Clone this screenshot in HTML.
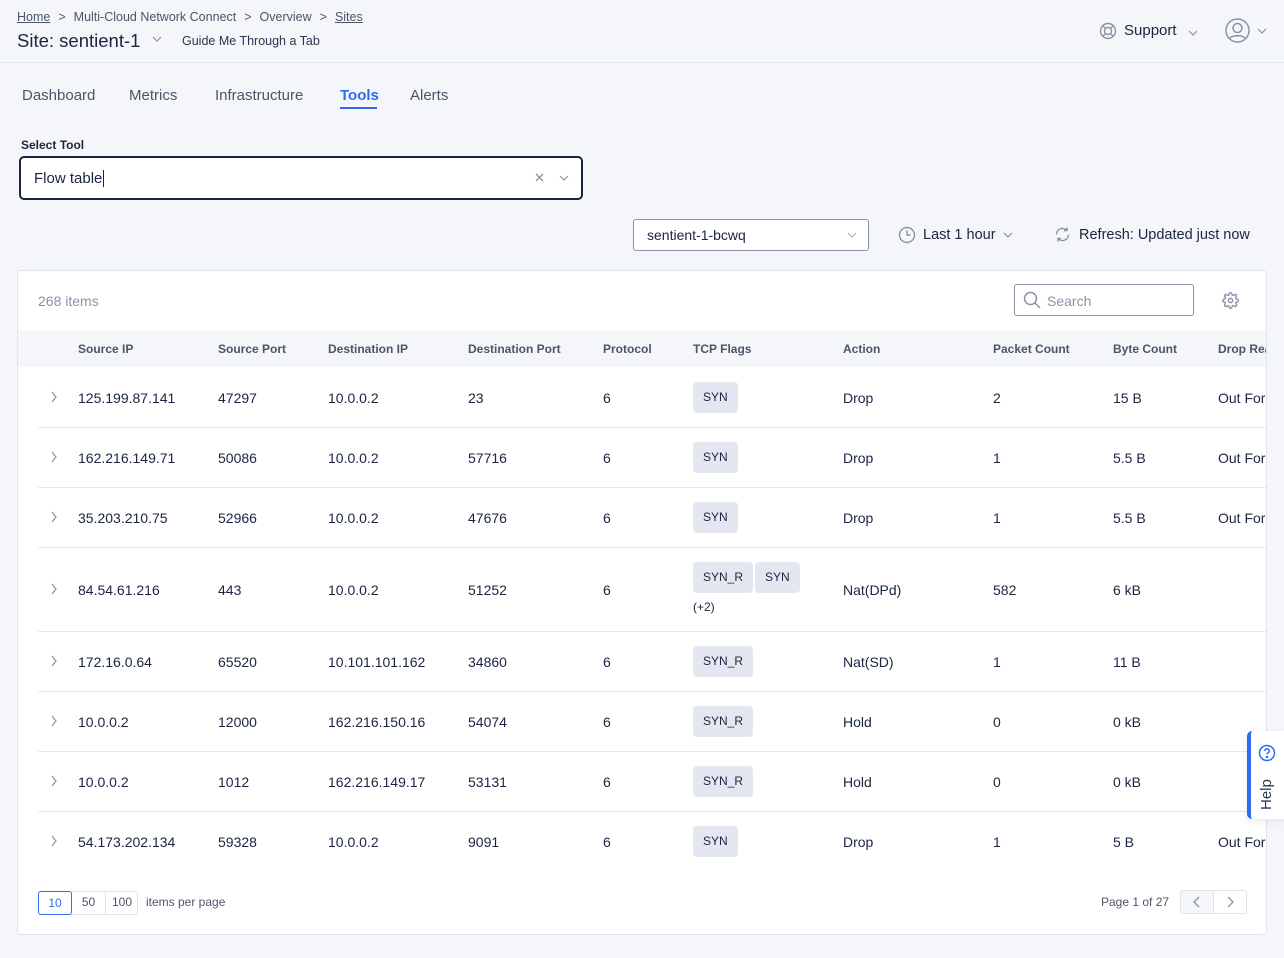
<!DOCTYPE html>
<html><head><meta charset="utf-8"><style>
*{box-sizing:border-box;margin:0;padding:0}
body{width:1284px;height:958px;background:#f5f6f9;font-family:"Liberation Sans",sans-serif;color:#1b2541;position:relative;overflow:hidden}
.a{position:absolute;white-space:nowrap}
.g{color:#4b5569}
.card{position:absolute;left:17px;top:270px;width:1250px;height:665px;background:#fff;border:1px solid #e1e5ee;border-radius:4px;overflow:hidden}
.th{position:absolute;left:0;top:59px;width:1250px;height:37px;background:#f5f6f9}
.th span{position:absolute;top:12px;font-size:12px;font-weight:bold;color:#4b5569;white-space:nowrap}
.row{position:absolute;left:20px;width:1230px;border-bottom:1px solid #e3e6ee}
.row span{position:absolute;font-size:14px;white-space:nowrap}
.tag{position:absolute;background:#e3e7f0;border-radius:4px;height:31px;font-size:12px;line-height:31px;padding:0 10px;color:#1b2541}
.row svg.ch{position:absolute;left:13px}
.sep{margin:0 8px;color:#4b5569}
</style></head><body>
<div class="a g" style="left:17px;top:10px;font-size:12.5px"><u>Home</u><span class="sep">&gt;</span>Multi-Cloud Network Connect<span class="sep">&gt;</span>Overview<span class="sep">&gt;</span><u>Sites</u></div>
<div class="a" style="left:17px;top:30px;font-size:18.5px">Site: sentient-1</div>
<svg class="a" style="left:152px;top:36px" width="10" height="6" viewBox="0 0 10 6" fill="none" stroke="#8a93a6" stroke-width="1.2"><path d="M1 1l4 4 4-4"/></svg>
<div class="a" style="left:182px;top:34px;font-size:12.5px;color:#2b3550">Guide Me Through a Tab</div>
<svg class="a" style="left:1099px;top:22px" width="18" height="18" viewBox="0 0 18 18" fill="none" stroke="#8a93a6" stroke-width="1.4"><circle cx="9" cy="9" r="7.5"/><circle cx="9" cy="9" r="3.5"/><path d="M4 4l2.5 2.5M14 4l-2.5 2.5M4 14l2.5-2.5M14 14l-2.5-2.5"/></svg>
<div class="a" style="left:1124px;top:22px;font-size:15px">Support</div>
<svg class="a" style="left:1188px;top:30px" width="10" height="6" viewBox="0 0 10 6" fill="none" stroke="#8a93a6" stroke-width="1.2"><path d="M1 1l4 4 4-4"/></svg>
<svg class="a" style="left:1225px;top:18px" width="25" height="25" viewBox="0 0 25 25" fill="none" stroke="#8a93a6" stroke-width="1.5"><circle cx="12.5" cy="12.5" r="11.5"/><circle cx="12.5" cy="10" r="4.5"/><path d="M5 20c3-3 12-3 15 0"/></svg>
<svg class="a" style="left:1257px;top:28px" width="10" height="6" viewBox="0 0 10 6" fill="none" stroke="#8a93a6" stroke-width="1.2"><path d="M1 1l4 4 4-4"/></svg>
<div class="a" style="left:0;top:62px;width:1284px;height:1px;background:#e1e5ee"></div>
<div class="a g" style="left:22px;top:87px;font-size:15px">Dashboard</div>
<div class="a g" style="left:129px;top:87px;font-size:15px">Metrics</div>
<div class="a g" style="left:215px;top:87px;font-size:15px">Infrastructure</div>
<div class="a" style="left:340px;top:87px;font-size:15px;font-weight:bold;color:#2f6bf0">Tools</div>
<div class="a" style="left:340px;top:107px;width:37px;height:2px;background:#2f6bf0"></div>
<div class="a g" style="left:410px;top:87px;font-size:15px">Alerts</div>
<div class="a" style="left:21px;top:138px;font-size:12px;font-weight:bold">Select Tool</div>
<div class="a" style="left:19px;top:156px;width:564px;height:44px;border:2px solid #1b2541;border-radius:5px;background:#fff"></div>
<div class="a" style="left:34px;top:170px;font-size:15px">Flow table<span style="border-left:1px solid #1b2541;margin-left:1px"></span></div>
<svg class="a" style="left:535px;top:173px" width="9" height="9" viewBox="0 0 9 9" stroke="#8a93a6" stroke-width="1.3"><path d="M1 1l7 7M8 1l-7 7"/></svg>
<svg class="a" style="left:559px;top:175px" width="10" height="6" viewBox="0 0 10 6" fill="none" stroke="#8a93a6" stroke-width="1.2"><path d="M1 1l4 4 4-4"/></svg>
<div class="a" style="left:633px;top:219px;width:236px;height:32px;border:1px solid #8a93a6;border-radius:3px;background:#fff"></div>
<div class="a" style="left:647px;top:227px;font-size:14px">sentient-1-bcwq</div>
<svg class="a" style="left:847px;top:232px" width="10" height="6" viewBox="0 0 10 6" fill="none" stroke="#b0b7c5" stroke-width="1.2"><path d="M1 1l4 4 4-4"/></svg>
<svg class="a" style="left:898px;top:226px" width="18" height="18" viewBox="0 0 18 18" fill="none" stroke="#8a93a6" stroke-width="1.4"><circle cx="9" cy="9" r="7.5"/><path d="M9 4.5V9h3.5"/></svg>
<div class="a" style="left:923px;top:227px;font-size:14.5px">Last 1 hour</div>
<svg class="a" style="left:1003px;top:232px" width="10" height="6" viewBox="0 0 10 6" fill="none" stroke="#8a93a6" stroke-width="1.2"><path d="M1 1l4 4 4-4"/></svg>
<svg class="a" style="left:1054px;top:226px" width="17" height="17" viewBox="0 0 17 17" fill="none" stroke="#8a93a6" stroke-width="1.4"><path d="M2.5 8.5a6 6 0 0 1 10.5-4M14.5 8.5a6 6 0 0 1-10.5 4M13 1.5v3h-3M4 15.5v-3h3"/></svg>
<div class="a" style="left:1079px;top:227px;font-size:14.5px">Refresh: Updated just now</div>

<div class="card">
<div class="a" style="left:20px;top:22px;font-size:14px;color:#8a93a6">268 items</div>
<div class="a" style="left:996px;top:13px;width:180px;height:32px;border:1px solid #8a93a6;border-radius:3px"></div>
<svg class="a" style="left:1005px;top:20px" width="18" height="18" viewBox="0 0 18 18" fill="none" stroke="#8a93a6" stroke-width="1.5"><circle cx="7.5" cy="7.5" r="6"/><path d="M12 12l5 5"/></svg>
<div class="a" style="left:1029px;top:22px;font-size:14px;color:#8a93a6">Search</div>
<svg class="a" style="left:1204px;top:21px" width="17" height="17" viewBox="0 0 24 24" fill="none" stroke="#8a93a6" stroke-width="2"><circle cx="12" cy="12" r="3"/><path d="M19.4 15a1.7 1.7 0 0 0 .3 1.8l.1.1a2 2 0 1 1-2.8 2.8l-.1-.1a1.7 1.7 0 0 0-1.8-.3 1.7 1.7 0 0 0-1 1.5V21a2 2 0 1 1-4 0v-.1a1.7 1.7 0 0 0-1.1-1.5 1.7 1.7 0 0 0-1.8.3l-.1.1a2 2 0 1 1-2.8-2.8l.1-.1a1.7 1.7 0 0 0 .3-1.8 1.7 1.7 0 0 0-1.5-1H3a2 2 0 1 1 0-4h.1a1.7 1.7 0 0 0 1.5-1.1 1.7 1.7 0 0 0-.3-1.8l-.1-.1a2 2 0 1 1 2.8-2.8l.1.1a1.7 1.7 0 0 0 1.8.3H9a1.7 1.7 0 0 0 1-1.5V3a2 2 0 1 1 4 0v.1a1.7 1.7 0 0 0 1 1.5 1.7 1.7 0 0 0 1.8-.3l.1-.1a2 2 0 1 1 2.8 2.8l-.1.1a1.7 1.7 0 0 0-.3 1.8V9a1.7 1.7 0 0 0 1.5 1H21a2 2 0 1 1 0 4h-.1a1.7 1.7 0 0 0-1.5 1z"/></svg>
<div class="th"><span style="left:60px">Source IP</span><span style="left:200px">Source Port</span><span style="left:310px">Destination IP</span><span style="left:450px">Destination Port</span><span style="left:585px">Protocol</span><span style="left:675px">TCP Flags</span><span style="left:825px">Action</span><span style="left:975px">Packet Count</span><span style="left:1095px">Byte Count</span><span style="left:1200px">Drop Reason</span></div>

<div class="row" style="top:96px;height:61px"><svg class="ch" style="top:24px" width="6" height="12" viewBox="0 0 6 12" fill="none" stroke="#8a93a6" stroke-width="1.2"><path d="M1 1l4 5-4 5"/></svg><span style="left:40px;top:23px">125.199.87.141</span><span style="left:180px;top:23px">47297</span><span style="left:290px;top:23px">10.0.0.2</span><span style="left:430px;top:23px">23</span><span style="left:565px;top:23px">6</span><div class="tag" style="left:655px;top:15px">SYN</div><span style="left:805px;top:23px">Drop</span><span style="left:955px;top:23px">2</span><span style="left:1075px;top:23px">15 B</span><span style="left:1180px;top:23px">Out For</span></div>
<div class="row" style="top:157px;height:60px"><svg class="ch" style="top:23px" width="6" height="12" viewBox="0 0 6 12" fill="none" stroke="#8a93a6" stroke-width="1.2"><path d="M1 1l4 5-4 5"/></svg><span style="left:40px;top:22px">162.216.149.71</span><span style="left:180px;top:22px">50086</span><span style="left:290px;top:22px">10.0.0.2</span><span style="left:430px;top:22px">57716</span><span style="left:565px;top:22px">6</span><div class="tag" style="left:655px;top:14px">SYN</div><span style="left:805px;top:22px">Drop</span><span style="left:955px;top:22px">1</span><span style="left:1075px;top:22px">5.5 B</span><span style="left:1180px;top:22px">Out For</span></div>
<div class="row" style="top:217px;height:60px"><svg class="ch" style="top:23px" width="6" height="12" viewBox="0 0 6 12" fill="none" stroke="#8a93a6" stroke-width="1.2"><path d="M1 1l4 5-4 5"/></svg><span style="left:40px;top:22px">35.203.210.75</span><span style="left:180px;top:22px">52966</span><span style="left:290px;top:22px">10.0.0.2</span><span style="left:430px;top:22px">47676</span><span style="left:565px;top:22px">6</span><div class="tag" style="left:655px;top:14px">SYN</div><span style="left:805px;top:22px">Drop</span><span style="left:955px;top:22px">1</span><span style="left:1075px;top:22px">5.5 B</span><span style="left:1180px;top:22px">Out For</span></div>
<div class="row" style="top:277px;height:84px"><svg class="ch" style="top:35px" width="6" height="12" viewBox="0 0 6 12" fill="none" stroke="#8a93a6" stroke-width="1.2"><path d="M1 1l4 5-4 5"/></svg><span style="left:40px;top:34px">84.54.61.216</span><span style="left:180px;top:34px">443</span><span style="left:290px;top:34px">10.0.0.2</span><span style="left:430px;top:34px">51252</span><span style="left:565px;top:34px">6</span><div class="tag" style="left:655px;top:14px">SYN_R</div><div class="tag" style="left:717px;top:14px">SYN</div><span style="left:655px;top:52px;font-size:12px">(+2)</span><span style="left:805px;top:34px">Nat(DPd)</span><span style="left:955px;top:34px">582</span><span style="left:1075px;top:34px">6 kB</span></div>
<div class="row" style="top:361px;height:60px"><svg class="ch" style="top:23px" width="6" height="12" viewBox="0 0 6 12" fill="none" stroke="#8a93a6" stroke-width="1.2"><path d="M1 1l4 5-4 5"/></svg><span style="left:40px;top:22px">172.16.0.64</span><span style="left:180px;top:22px">65520</span><span style="left:290px;top:22px">10.101.101.162</span><span style="left:430px;top:22px">34860</span><span style="left:565px;top:22px">6</span><div class="tag" style="left:655px;top:14px">SYN_R</div><span style="left:805px;top:22px">Nat(SD)</span><span style="left:955px;top:22px">1</span><span style="left:1075px;top:22px">11 B</span></div>
<div class="row" style="top:421px;height:60px"><svg class="ch" style="top:23px" width="6" height="12" viewBox="0 0 6 12" fill="none" stroke="#8a93a6" stroke-width="1.2"><path d="M1 1l4 5-4 5"/></svg><span style="left:40px;top:22px">10.0.0.2</span><span style="left:180px;top:22px">12000</span><span style="left:290px;top:22px">162.216.150.16</span><span style="left:430px;top:22px">54074</span><span style="left:565px;top:22px">6</span><div class="tag" style="left:655px;top:14px">SYN_R</div><span style="left:805px;top:22px">Hold</span><span style="left:955px;top:22px">0</span><span style="left:1075px;top:22px">0 kB</span></div>
<div class="row" style="top:481px;height:60px"><svg class="ch" style="top:23px" width="6" height="12" viewBox="0 0 6 12" fill="none" stroke="#8a93a6" stroke-width="1.2"><path d="M1 1l4 5-4 5"/></svg><span style="left:40px;top:22px">10.0.0.2</span><span style="left:180px;top:22px">1012</span><span style="left:290px;top:22px">162.216.149.17</span><span style="left:430px;top:22px">53131</span><span style="left:565px;top:22px">6</span><div class="tag" style="left:655px;top:14px">SYN_R</div><span style="left:805px;top:22px">Hold</span><span style="left:955px;top:22px">0</span><span style="left:1075px;top:22px">0 kB</span></div>
<div class="row" style="top:541px;height:60px;border:none"><svg class="ch" style="top:23px" width="6" height="12" viewBox="0 0 6 12" fill="none" stroke="#8a93a6" stroke-width="1.2"><path d="M1 1l4 5-4 5"/></svg><span style="left:40px;top:22px">54.173.202.134</span><span style="left:180px;top:22px">59328</span><span style="left:290px;top:22px">10.0.0.2</span><span style="left:430px;top:22px">9091</span><span style="left:565px;top:22px">6</span><div class="tag" style="left:655px;top:14px">SYN</div><span style="left:805px;top:22px">Drop</span><span style="left:955px;top:22px">1</span><span style="left:1075px;top:22px">5 B</span><span style="left:1180px;top:22px">Out For</span></div>

<div class="a" style="left:20px;top:620px;width:100px;height:24px;border:1px solid #dfe3ec;border-radius:3px"></div>
<div class="a" style="left:20px;top:620px;width:34px;height:24px;border:1px solid #2f6bf0;border-radius:3px;color:#2f6bf0;font-size:12px;text-align:center;line-height:22px">10</div>
<div class="a g" style="left:54px;top:620px;width:34px;height:24px;border-right:1px solid #dfe3ec;font-size:12px;text-align:center;line-height:22px">50</div>
<div class="a g" style="left:88px;top:620px;width:32px;font-size:12px;text-align:center;line-height:22px">100</div>
<div class="a g" style="left:128px;top:624px;font-size:12px">items per page</div>
<div class="a g" style="left:1083px;top:624px;font-size:12px">Page 1 of 27</div>
<div class="a" style="left:1162px;top:619px;width:67px;height:24px;border:1px solid #dfe3ec;border-radius:3px;overflow:hidden"><div style="position:absolute;left:0;top:0;width:33px;height:24px;background:#f5f6f9;border-right:1px solid #dfe3ec"></div></div>
<svg class="a" style="left:1175px;top:625px" width="7" height="12" viewBox="0 0 7 12" fill="none" stroke="#8a93a6" stroke-width="1.3"><path d="M6 1L1 6l5 5"/></svg>
<svg class="a" style="left:1209px;top:625px" width="7" height="12" viewBox="0 0 7 12" fill="none" stroke="#8a93a6" stroke-width="1.3"><path d="M1 1l5 5-5 5"/></svg>
</div>

<div class="a" style="left:1247px;top:731px;width:40px;height:88px;background:#fff;border-left:4px solid #2f6bf0;border-radius:5px 0 0 5px;box-shadow:0 2px 8px rgba(0,0,0,.08)"></div>
<svg class="a" style="left:1258px;top:744px" width="18" height="18" viewBox="0 0 18 18" fill="none" stroke="#2f6bf0" stroke-width="1.5"><circle cx="9" cy="9" r="7.5"/><path d="M6.8 7a2.2 2.2 0 1 1 3 2c-.6.3-.8.7-.8 1.4"/><circle cx="9" cy="13" r=".5" fill="#2f6bf0"/></svg>
<div class="a" style="left:1258px;top:810px;font-size:15px;transform:rotate(-90deg);transform-origin:0 0;color:#2b3550">Help</div>
</body></html>
